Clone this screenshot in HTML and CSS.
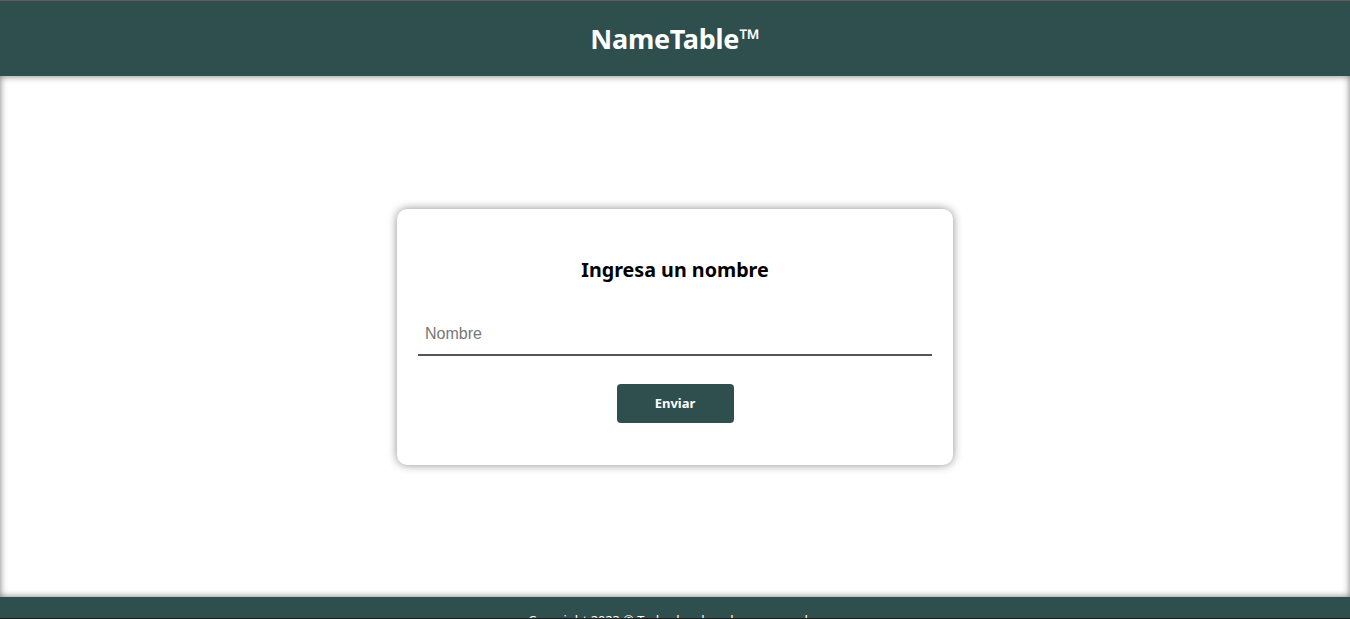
FILE: index.html
```html
<!DOCTYPE html>
<html lang="es">
<head>
<meta charset="utf-8">
<title>NameTable</title>
<link rel="stylesheet" href="styles.css">
</head>
<body>
<div class="page">
  <header class="header">
    <h1 class="brand">NameTable™</h1>
  </header>
  <main class="main">
    <form class="card">
      <h2 class="card-title">Ingresa un nombre</h2>
      <input class="field" type="text" placeholder="Nombre">
      <button class="btn" type="button">Enviar</button>
    </form>
  </main>
  <footer class="footer">
    <p class="copy">Copyright 2023 © Todos los derechos reservados</p>
  </footer>
</div>
</body>
</html>
```

FILE: styles.css
```css
* { box-sizing: border-box; }
html, body { margin: 0; padding: 0; }
body {
  font-family: "Noto Sans", "Open Sans", sans-serif;
  background: #fff;
}
.page {
  height: 619px;
  overflow: hidden;
  display: flex;
  flex-direction: column;
  border-top: 1px solid #5e5e5e;
  border-bottom: 1px solid #1e1e1e;
}
.header {
  height: 75px;
  flex: none;
  background: #2f4f4f;
  display: flex;
  align-items: center;
  justify-content: center;
}
.brand {
  margin: 0;
  color: #fff;
  font-size: 27px;
  font-weight: 700;
  letter-spacing: -0.3px;
}
.main {
  flex: 1;
  display: flex;
  align-items: center;
  justify-content: center;
  box-shadow: inset 0 0 7px rgba(0,0,0,0.55);
}
.card {
  width: 556px;
  height: 256px;
  background: #fff;
  border-radius: 10px;
  box-shadow: 0 0 10px rgba(0,0,0,0.45);
  padding: 40px 21px 0;
  display: flex;
  flex-direction: column;
  align-items: center;
}
.card-title {
  margin: 0;
  font-size: 19.7px;
  font-weight: 700;
  color: #000;
  line-height: 42px;
}
.field {
  width: 100%;
  margin-top: 21px;
  height: 44px;
  border: 0;
  border-bottom: 2px solid #555;
  padding: 2px 7px 0;
  font-family: "Liberation Sans", Arial, sans-serif;
  font-size: 16px;
  outline: none;
  background: transparent;
}
.field::placeholder { color: #777; }
.btn {
  margin-top: 28px;
  width: 117px;
  height: 39px;
  border: 0;
  border-radius: 4px;
  background: #2f4f4f;
  color: #fff;
  font-family: "Noto Sans", "Open Sans", sans-serif;
  font-size: 13px;
  font-weight: 700;
}
.footer {
  height: 21px;
  flex: none;
  background: #2f4f4f;
  display: flex;
  justify-content: center;
}
.copy {
  margin: 0;
  padding-top: 14px;
  color: #fff;
  font-size: 12.8px;
  white-space: nowrap;
}
```
